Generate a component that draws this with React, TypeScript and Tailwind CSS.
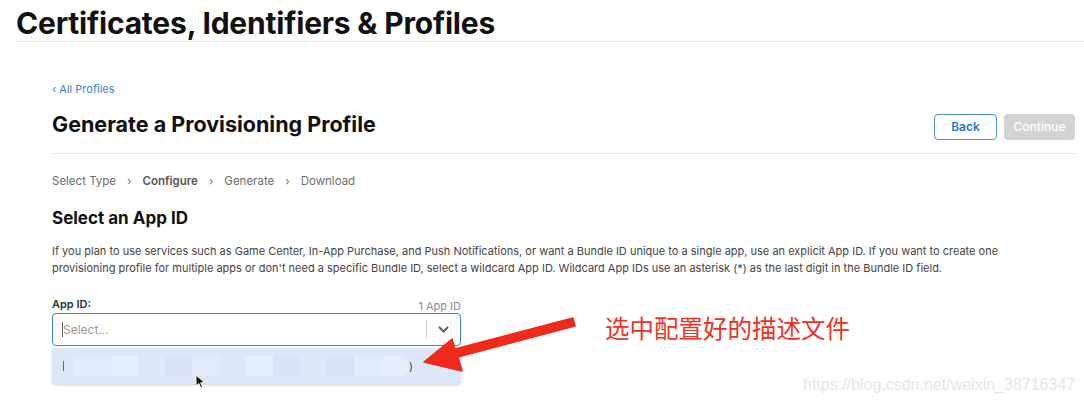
import React from "react";

export default function App() {
  const font = { fontFamily: "Inter, 'Noto Sans', sans-serif" };
  return (
    <div className="relative w-[1084px] h-[405px] overflow-hidden bg-white text-[#1d1d1f]" style={font}>
      <div className="pl-[16px] pt-[6px]">
        <h1 className="text-[30px] leading-[34px] font-bold tracking-[-0.2px] text-[#111]">Certificates, Identifiers &amp; Profiles</h1>
        <div className="mt-[1px] h-px bg-[#e3e3e3]" />
      </div>

      <div className="ml-[52px] mr-[9px] mt-[40px]">
        <div className="text-[11px] leading-[14px] text-[#3a82d5]">‹ All Profiles</div>
        <div className="mt-[15px] flex items-start justify-between">
          <h2 className="text-[21.5px] leading-[26px] font-bold text-[#111]">Generate a Provisioning Profile</h2>
          <div className="mt-[3px] flex gap-[7px]">
            <button className="w-[63px] h-[26px] rounded-[4px] border border-[#4a8fdc] text-[12px] font-semibold text-[#2c74c9] bg-white">Back</button>
            <button className="w-[71px] h-[26px] rounded-[4px] bg-[#d3d3d3] text-[12px] font-medium text-white">Continue</button>
          </div>
        </div>
        <div className="mt-[13px] h-px bg-[#e3e3e3]" />

        <div className="mt-[19px] flex items-center text-[11.5px] leading-[16px] text-[#6e6e6e]">
          <span>Select Type</span>
          <span className="mx-[11px]">›</span>
          <span className="font-semibold text-[#555]">Configure</span>
          <span className="mx-[11px]">›</span>
          <span>Generate</span>
          <span className="mx-[11px]">›</span>
          <span>Download</span>
        </div>

        <h3 className="mt-[18px] text-[17px] leading-[22px] font-bold text-[#111]">Select an App ID</h3>
        <p className="mt-[14px] w-[990px] text-[11px] leading-[17px] text-[#444]">
          If you plan to use services such as Game Center, In-App Purchase, and Push Notifications, or want a Bundle ID unique to a single app, use an explicit App ID. If you want to create one provisioning profile for multiple apps or don't need a specific Bundle ID, select a wildcard App ID. Wildcard App IDs use an asterisk (*) as the last digit in the Bundle ID field.
        </p>

        <div className="mt-[20px] w-[409px]">
          <div className="flex items-end justify-between">
            <div className="text-[11px] leading-[14px] font-semibold text-[#333]">App ID:</div>
            <div className="translate-y-[2px] text-[11px] leading-[14px] text-[#8a8a8a]">1 App ID</div>
          </div>
          <div className="mt-[2px] h-[33px] rounded-[4px] border-[1.5px] border-[#3b82e0] flex items-center bg-white">
            <span className="ml-[9px] w-px h-[15px] bg-[#666]" />
            <span className="text-[12px] text-[#9a9a9a]">Select...</span>
            <span className="ml-auto w-px h-[19px] bg-[#d4d4d4]" />
            <svg className="mx-[10px]" width="13" height="13" viewBox="0 0 13 13">
              <path d="M2.5 4.5 L6.5 8.5 L10.5 4.5" fill="none" stroke="#555" strokeWidth="1.8" strokeLinecap="round" strokeLinejoin="round" />
            </svg>
          </div>
          <div className="mt-[2px] h-[36px] rounded-b-[4px] bg-[#dce8fa] shadow-[0_1px_3px_rgba(0,0,0,0.2)] flex items-center relative">
            <span className="ml-[11px] w-px h-[10px] bg-[#666]" />
            <div className="ml-[10px] flex h-[20px]">
              <span className="w-[37px] bg-[#e2ecfb]" />
              <span className="w-[27px] bg-[#e6effd]" />
              <span className="w-[27px] bg-[#dde9fa]" />
              <span className="w-[27px] bg-[#d6e2f5]" />
              <span className="w-[27px] bg-[#e2ecfb]" />
              <span className="w-[27px] bg-[#dde9fa]" />
              <span className="w-[27px] bg-[#e4eefc]" />
              <span className="w-[27px] bg-[#d7e3f6]" />
              <span className="w-[27px] bg-[#dde9fa]" />
              <span className="w-[27px] bg-[#d6e2f5]" />
              <span className="w-[27px] bg-[#e2ecfb]" />
              <span className="w-[27px] bg-[#e4eefc] rounded-r-[6px]" />
            </div>
            <span className="ml-[1px] text-[11px] text-[#444]">)</span>
            <svg className="absolute left-[143px] top-[26px]" width="12" height="16" viewBox="0 0 12 16">
              <path d="M1 1 L1 12 L3.8 9.5 L5.8 14 L7.6 13.2 L5.7 8.8 L9.5 8.6 Z" fill="#111" stroke="#fff" strokeWidth="1" />
            </svg>
          </div>
        </div>
      </div>

      <svg className="absolute left-0 top-0 pointer-events-none" width="1084" height="405" viewBox="0 0 1084 405">
        <path d="M573 318 L575 326 L458 357 L462 371 L424 362 L452 339 L455 349 Z" fill="#ee2a1b" strokeLinejoin="round" stroke="#ee2a1b" strokeWidth="1.5" />
      </svg>
      <div className="absolute left-[605px] top-[313px] text-[24.5px] leading-[30px] text-[#ee3224]" style={{ fontFamily: "'Noto Sans CJK SC', sans-serif" }}>选中配置好的描述文件</div>
      <div className="absolute left-[803px] top-[375px] text-[16px] leading-[20px] text-[#e6e6e6]" style={{ fontFamily: "'Liberation Sans', Arial, sans-serif" }}>https://blog.csdn.net/weixin_38716347</div>
    </div>
  );
}
